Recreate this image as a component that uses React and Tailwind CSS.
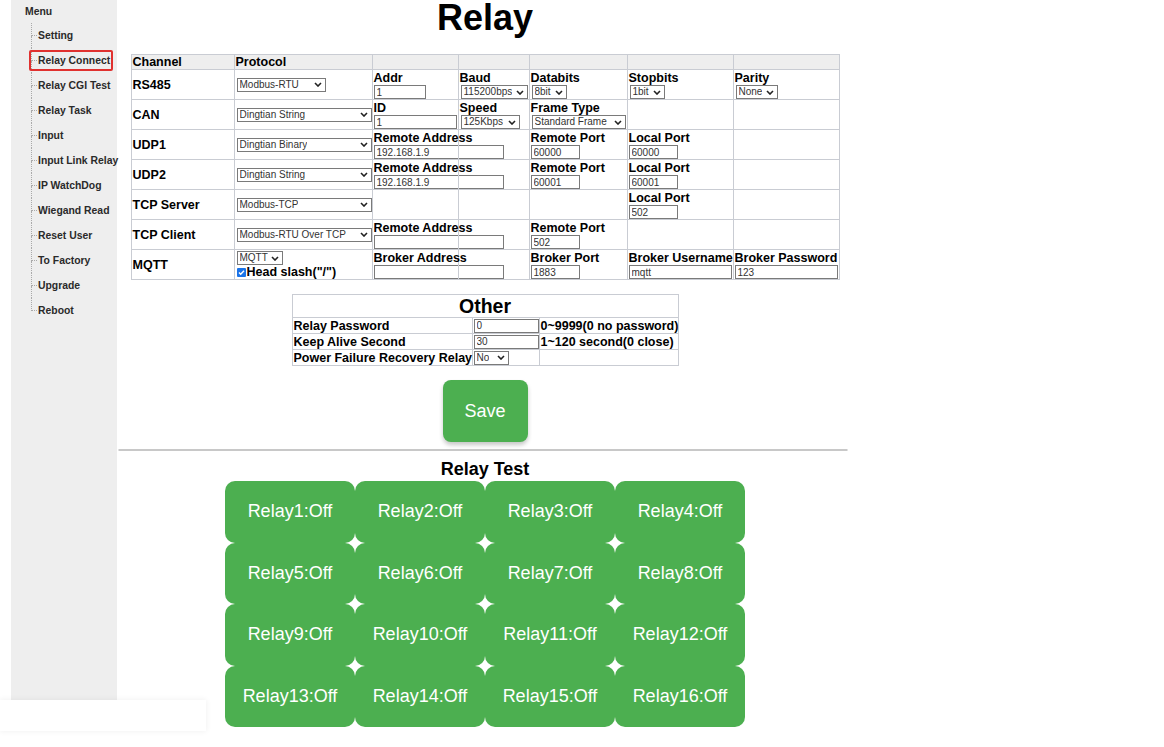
import React from "react";

const menu = [
  "Setting",
  "Relay Connect",
  "Relay CGI Test",
  "Relay Task",
  "Input",
  "Input Link Relay",
  "IP WatchDog",
  "Wiegand Read",
  "Reset User",
  "To Factory",
  "Upgrade",
  "Reboot",
];

const Chevron = () => (
  <svg width="8" height="5" viewBox="0 0 8 5" className="shrink-0">
    <path d="M1 1l3 3 3-3" stroke="#222" strokeWidth="1.6" fill="none" />
  </svg>
);

const Sel = ({ w, children }) => (
  <span
    className={`flex h-[14px] items-center justify-between border border-[#7a7a7a] bg-white pl-[2px] pr-[3px] text-[10px] font-normal leading-none text-[#333] ${w}`}
  >
    <span className="truncate">{children}</span>
    <Chevron />
  </span>
);

const Inp = ({ w, value }) => (
  <input
    readOnly
    defaultValue={value}
    className={`block h-[14px] border border-[#7a7a7a] bg-white px-[2px] text-[10px] font-normal leading-none text-[#333] ${w}`}
  />
);

const Field = ({ label, children }) => (
  <div className="pt-[1px]">
    <div className="whitespace-nowrap text-[12.5px] font-bold leading-[14px]">{label}</div>
    {children}
  </div>
);

const td = "border border-[#c9ccd3] p-0 pl-[1px] align-top leading-[14px]";
const tdMid = "border border-[#c9ccd3] p-0 pl-[1px] align-middle leading-[14px]";
const th = "border border-[#c9ccd3] bg-[#eeeeee] p-0 pl-[1px] text-left text-[12.5px] font-bold leading-[13px]";

const Row = ({ name, proto, cells }) => (
  <tr className="h-[30px]">
    <td className={tdMid}>
      <span className="text-[12.5px] font-bold">{name}</span>
    </td>
    <td className={tdMid}>{proto}</td>
    {cells.map((c, i) => (
      <td key={i} className={td}>
        {c}
      </td>
    ))}
  </tr>
);

export default function App() {
  return (
    <div className="relative flex h-[747px] w-[1164px] overflow-hidden bg-white font-['Liberation_Sans',Arial,sans-serif] text-black">
      {/* sidebar */}
      <div className="w-[118px] shrink-0 pl-[11px]">
        <div className="h-[700px] w-[106px] bg-[#eeeeee] pt-[6px] text-[10.4px] font-bold text-[#2a2a2a]">
          <div className="pl-[14px] leading-[12px]">Menu</div>
          <ul className="mt-[5px] pl-[20px]">
            {menu.map((m, i) => (
              <li key={m} className="relative flex h-[25px] items-stretch">
                <div className="flex w-[6px] shrink-0 flex-col">
                  <div className="h-1/2 border-b border-l border-dotted border-[#aaaaaa]" />
                  <div className={i === menu.length - 1 ? "h-1/2" : "h-1/2 border-l border-dotted border-[#aaaaaa]"} />
                </div>
                <span className="flex items-center whitespace-nowrap pl-[1px]">{m}</span>
                {m === "Relay Connect" && (
                  <div className="absolute left-[-2px] top-[1.5px] h-[21px] w-[84px] rounded-[2px] border-2 border-[#e0312f]" />
                )}
              </li>
            ))}
          </ul>
        </div>
      </div>

      {/* main */}
      <div className="flex w-[729px] shrink-0 flex-col items-center pl-[5px]">
        <h1 className="-mt-[2px] text-[36px] font-bold leading-[40px]">Relay</h1>

        <table className="mt-[16px] w-[708px] table-fixed border-collapse">
          <thead>
            <tr className="h-[15px]">
              <th className={`${th} w-[103px]`}>Channel</th>
              <th className={`${th} w-[138px]`}>Protocol</th>
              <th className={`${th} w-[86px]`}></th>
              <th className={`${th} w-[71px]`}></th>
              <th className={`${th} w-[98px]`}></th>
              <th className={`${th} w-[106px]`}></th>
              <th className={`${th} w-[106px]`}></th>
            </tr>
          </thead>
          <tbody>
            <Row
              name="RS485"
              proto={<Sel w="w-[89px] ml-[1px]">Modbus-RTU</Sel>}
              cells={[
                <Field label="Addr"><Inp w="w-[52px]" value="1" /></Field>,
                <Field label="Baud"><Sel w="w-[67px] ml-[1px]">115200bps</Sel></Field>,
                <Field label="Databits"><Sel w="w-[35px] ml-[1px]">8bit</Sel></Field>,
                <Field label="Stopbits"><Sel w="w-[35px] ml-[1px]">1bit</Sel></Field>,
                <Field label="Parity"><Sel w="w-[42px] ml-[1px]">None</Sel></Field>,
              ]}
            />
            <Row
              name="CAN"
              proto={<Sel w="w-[135px] ml-[1px]">Dingtian String</Sel>}
              cells={[
                <Field label="ID"><Inp w="w-[83px]" value="1" /></Field>,
                <Field label="Speed"><Sel w="w-[59px] ml-[1px]">125Kbps</Sel></Field>,
                <Field label="Frame Type"><Sel w="w-[94px] ml-[1px]">Standard Frame</Sel></Field>,
                null,
                null,
              ]}
            />
            <Row
              name="UDP1"
              proto={<Sel w="w-[135px] ml-[1px]">Dingtian Binary</Sel>}
              cells={[
                <Field label="Remote Address"><Inp w="w-[130px]" value="192.168.1.9" /></Field>,
                null,
                <Field label="Remote Port"><Inp w="w-[49px]" value="60000" /></Field>,
                <Field label="Local Port"><Inp w="w-[49px]" value="60000" /></Field>,
                null,
              ]}
            />
            <Row
              name="UDP2"
              proto={<Sel w="w-[135px] ml-[1px]">Dingtian String</Sel>}
              cells={[
                <Field label="Remote Address"><Inp w="w-[130px]" value="192.168.1.9" /></Field>,
                null,
                <Field label="Remote Port"><Inp w="w-[49px]" value="60001" /></Field>,
                <Field label="Local Port"><Inp w="w-[49px]" value="60001" /></Field>,
                null,
              ]}
            />
            <Row
              name="TCP Server"
              proto={<Sel w="w-[135px] ml-[1px]">Modbus-TCP</Sel>}
              cells={[
                null,
                null,
                null,
                <Field label="Local Port"><Inp w="w-[49px]" value="502" /></Field>,
                null,
              ]}
            />
            <Row
              name="TCP Client"
              proto={<Sel w="w-[135px] ml-[1px]">Modbus-RTU Over TCP</Sel>}
              cells={[
                <Field label="Remote Address"><Inp w="w-[130px]" value="" /></Field>,
                null,
                <Field label="Remote Port"><Inp w="w-[49px]" value="502" /></Field>,
                null,
                null,
              ]}
            />
            <tr className="h-[30px]">
              <td className={tdMid}>
                <span className="text-[12.5px] font-bold">MQTT</span>
              </td>
              <td className={td}>
                <div className="pl-[1px] pt-[1px]">
                  <Sel w="w-[46px]">MQTT</Sel>
                  <div className="flex items-center text-[12.5px] font-bold leading-[14px]">
                    <span className="mr-[1px] flex h-[9px] w-[9px] items-center justify-center rounded-[1px] bg-[#1a73e8]">
                      <svg width="7" height="7" viewBox="0 0 7 7">
                        <path d="M1 3.6l1.7 1.7L6 1.8" stroke="#fff" strokeWidth="1.4" fill="none" />
                      </svg>
                    </span>
                    Head slash("/")
                  </div>
                </div>
              </td>
              <td className={td}>
                <Field label="Broker Address"><Inp w="w-[130px]" value="" /></Field>
              </td>
              <td className={td}></td>
              <td className={td}>
                <Field label="Broker Port"><Inp w="w-[49px]" value="1883" /></Field>
              </td>
              <td className={td}>
                <Field label="Broker Username"><Inp w="w-[103px]" value="mqtt" /></Field>
              </td>
              <td className={td}>
                <Field label="Broker Password"><Inp w="w-[103px]" value="123" /></Field>
              </td>
            </tr>
          </tbody>
        </table>

        <table className="mt-[14px] w-[386px] table-fixed border-collapse">
          <colgroup>
            <col className="w-[180px]" />
            <col className="w-[67px]" />
            <col className="w-[139px]" />
          </colgroup>
          <thead>
            <tr className="h-[23px]">
              <th colSpan={3} className="border border-[#c9ccd3] p-0 text-center text-[19.5px] font-bold leading-[22px]">
                Other
              </th>
            </tr>
          </thead>
          <tbody className="text-[12.5px] font-bold">
            <tr className="h-[16px]">
              <td className={`${tdMid} whitespace-nowrap`}>Relay Password</td>
              <td className={tdMid}><Inp w="w-[65px]" value="0" /></td>
              <td className={`${tdMid} whitespace-nowrap`}>0~9999(0 no password)</td>
            </tr>
            <tr className="h-[16px]">
              <td className={`${tdMid} whitespace-nowrap`}>Keep Alive Second</td>
              <td className={tdMid}><Inp w="w-[65px]" value="30" /></td>
              <td className={`${tdMid} whitespace-nowrap`}>1~120 second(0 close)</td>
            </tr>
            <tr className="h-[16px]">
              <td className={`${tdMid} whitespace-nowrap`}>Power Failure Recovery Relay</td>
              <td className={tdMid}><Sel w="w-[35px]">No</Sel></td>
              <td className={tdMid}></td>
            </tr>
          </tbody>
        </table>

        <button className="mt-[14px] h-[62px] w-[85px] rounded-[8px] bg-[#4caf50] text-[18px] text-white shadow-[0_3px_4px_rgba(0,0,0,0.22)]">
          Save
        </button>

        <div className="mt-[7px] h-[2px] w-[729px] -translate-x-[2.5px] bg-[#c8c8c8]" />

        <div className="mt-[9px] text-[18px] font-bold leading-[18px]">Relay Test</div>

        <div className="mt-[3px] grid grid-cols-4">
          {Array.from({ length: 16 }, (_, i) => (
            <button
              key={i}
              className="h-[61.5px] w-[130px] rounded-[10px] bg-[#4caf50] text-[18px] text-white"
            >
              Relay{i + 1}:Off
            </button>
          ))}
        </div>
      </div>

      <div className="absolute left-0 top-[700px] h-[31px] w-[206px] bg-white shadow-[0_0_6px_rgba(0,0,0,0.07)]" />
    </div>
  );
}
